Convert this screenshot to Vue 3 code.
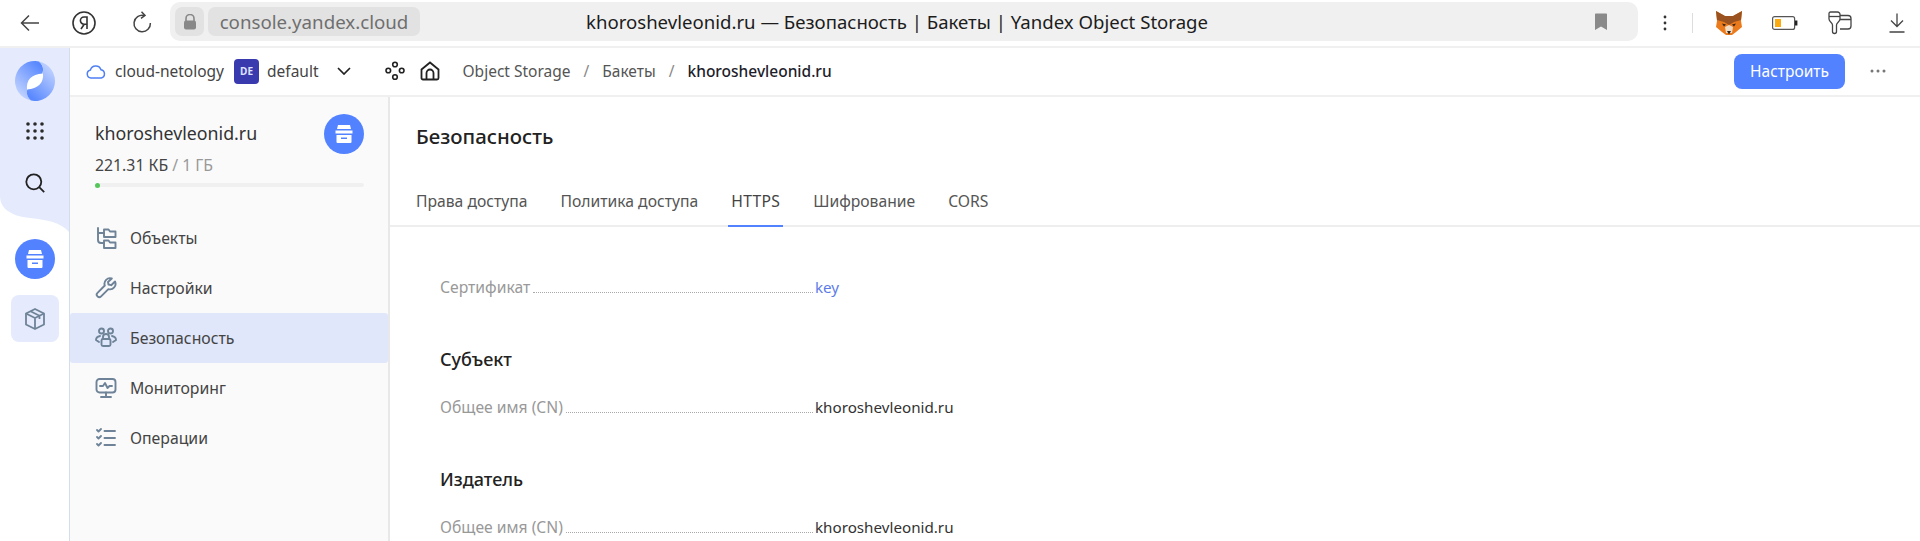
<script setup>
const navItems = [
  { label: "Объекты", icon: "objects" },
  { label: "Настройки", icon: "wrench" },
  { label: "Безопасность", icon: "people", active: true },
  { label: "Мониторинг", icon: "monitor" },
  { label: "Операции", icon: "tasks" },
];

const tabs = ["Права доступа", "Политика доступа", "HTTPS", "Шифрование", "CORS"];
</script>

<template>
  <div class="page">
    <div class="browser">
      <div class="browser-left">
        <svg class="b-back" width="24" height="24" viewBox="0 0 24 24" fill="none" stroke="#444" stroke-width="1.5"><path d="M21 12H4M11 4.5 3.5 12l7.5 7.5" /></svg>
        <svg class="b-ya" width="26" height="26" viewBox="0 0 26 26" fill="none" stroke="#333" stroke-width="1.6">
          <circle cx="13" cy="13" r="11" />
          <path d="M16 19V7h-3a3.5 3.5 0 0 0 0 7.2h3M13.4 14 10 19" />
        </svg>
        <svg class="b-reload" width="24" height="24" viewBox="0 0 24 24" fill="none" stroke="#444" stroke-width="1.5">
          <path d="M14.2 4.5A8.2 8.2 0 1 0 20.4 12" />
          <path d="M11.5 0.8 15 4.4l-4 3" />
        </svg>
      </div>
      <div class="address">
        <div class="lock-chip">
          <svg width="14" height="16" viewBox="0 0 14 16"><path d="M3 7V4.5a4 4 0 0 1 8 0V7" fill="none" stroke="#888" stroke-width="1.6" /><rect x="1" y="6.5" width="12" height="9" rx="2" fill="#888" /></svg>
        </div>
        <div class="host-chip">console.yandex.cloud</div>
        <div class="page-title">khoroshevleonid.ru — Безопасность | Бакеты | Yandex Object Storage</div>
        <svg class="bookmark" width="14" height="18" viewBox="0 0 14 18"><path d="M1 1.5C1 .9 1.4.5 2 .5h10c.6 0 1 .4 1 1V17l-6-3.6L1 17z" fill="#8a8a8a" /></svg>
      </div>
      <div class="browser-right">
        <svg class="b-more" width="4" height="18" viewBox="0 0 4 18" fill="#333"><circle cx="2" cy="3" r="1.4" /><circle cx="2" cy="9" r="1.4" /><circle cx="2" cy="15" r="1.4" /></svg>
        <span class="b-sep"></span>
        <svg class="b-fox" width="26" height="24" viewBox="0 0 26 24">
          <polygon points="0,0 9,5 17,5 26,0 25,10 26,16 20,21 16,24 10,24 6,21 0,16 1,10" fill="#ea7a1c" />
          <polygon points="0,0 9,5 17,5 26,0 25,9 18,11 13,14 8,11 1,9" fill="#9a5220" />
          <polygon points="9,16 13,14 17,16 16,22 10,22" fill="#f0dcc6" />
          <polygon points="11,20 15,20 13,23.5" fill="#33241a" />
          <polygon points="6,12.5 10,13.5 8,15.5" fill="#33241a" />
          <polygon points="20,12.5 16,13.5 18,15.5" fill="#33241a" />
        </svg>
        <svg class="b-battery" width="26" height="14" viewBox="0 0 26 14">
          <rect x=".6" y=".6" width="22" height="12.8" rx="2" fill="#fff" stroke="#555" stroke-width="1.2" />
          <rect x="3" y="3" width="6" height="8" fill="#fbab12" />
          <rect x="23" y="4.5" width="2.4" height="5" fill="#222" />
        </svg>
        <svg class="b-ext" width="24" height="24" viewBox="0 0 24 24" fill="none" stroke="#444" stroke-width="1.3">
          <path d="M12 4.5h8a3 3 0 0 1 3 3V15a3 3 0 0 1-3 3h-8M12 8.5h11" />
          <path d="M2.5 1h7A2.5 2.5 0 0 1 12 3.5V8c0 3-3.5 3.5-3.5 6v6.5a2 2 0 0 1-4 0V14C4.5 11.5 1 11 1 8V2.5A1.5 1.5 0 0 1 2.5 1z" fill="#fff" />
          <path d="M1 5.5h11" />
        </svg>
        <svg class="b-down" width="16" height="20" viewBox="0 0 16 20" fill="none" stroke="#444" stroke-width="1.3"><path d="M8 .5V13M2 7.5 8 13.5l6-6M.5 19h15" /></svg>
      </div>
    </div>

    <div class="app">
      <aside class="rail">
        <svg class="rail-bg" width="69" height="184" viewBox="0 0 69 184"><path d="M0 0H69V184C60 174 48 172 30 170 10 168 0 160 0 148Z" fill="#e5ebfc" /></svg>
        <svg class="rail-logo" width="40" height="40" viewBox="0 0 40 40">
          <defs>
            <linearGradient id="lobe-a" x1=".7" y1="0" x2=".1" y2=".9"><stop offset="0" stop-color="#5a89ff" /><stop offset="1" stop-color="#c6d6ff" /></linearGradient>
            <linearGradient id="lobe-b" x1=".3" y1="1" x2=".9" y2=".1"><stop offset="0" stop-color="#5a89ff" /><stop offset="1" stop-color="#c6d6ff" /></linearGradient>
          </defs>
          <path d="M24 .4C32 8 27 15 20 20S8 32 16 39.6A20 20 0 0 1 24 .4z" fill="url(#lobe-a)" />
          <path d="M16 39.6C8 32 13 25 20 20S32 8 24 .4A20 20 0 0 1 16 39.6z" fill="url(#lobe-b)" />
          <path d="M12 28.5C11 19 16 13.500 28 12.500 29 22 23 27.5 12 28.5z" fill="#fff" />
        </svg>
        <svg class="rail-grid" width="18" height="18" viewBox="0 0 18 18" fill="#2a2a2a">
          <circle cx="2" cy="2" r="1.8" /><circle cx="9" cy="2" r="1.8" /><circle cx="16" cy="2" r="1.8" />
          <circle cx="2" cy="9" r="1.8" /><circle cx="9" cy="9" r="1.8" /><circle cx="16" cy="9" r="1.8" />
          <circle cx="2" cy="16" r="1.8" /><circle cx="9" cy="16" r="1.8" /><circle cx="16" cy="16" r="1.8" />
        </svg>
        <svg class="rail-search" width="20" height="20" viewBox="0 0 20 20" fill="none" stroke="#222" stroke-width="1.8"><circle cx="8.8" cy="8.8" r="7.5" /><path d="m14.2 14.2 5 5" /></svg>
        <div class="rail-bucket">
          <svg width="20" height="20" viewBox="0 0 20 20" fill="#fff"><path d="M4 1h12l1 4H3z" /><path d="M1.5 6.5h17v3h-17z" /><path fill-rule="evenodd" d="M2.5 11h15v7a1 1 0 0 1-1 1h-13a1 1 0 0 1-1-1zM7 13.5V15h6v-1.5z" /></svg>
        </div>
        <div class="rail-tile">
          <svg width="20" height="22" viewBox="0 0 20 22" fill="none" stroke="#6e8398" stroke-width="1.8" stroke-linejoin="round"><path d="M10 1 1 5.5v11L10 21l9-4.5v-11z" /><path d="m1 5.5 9 4.5 9-4.5M10 10v11M5.5 3.2l9 4.6V11" /></svg>
        </div>
      </aside>

      <div class="workspace">
        <header class="topbar">
          <svg class="cloud" width="20" height="16" viewBox="0 0 20 16" fill="none" stroke="#4f7ff5" stroke-width="1.5"><path d="M5 15a4 4 0 0 1-.6-7.900A5.500 5.500 0 0 1 15 6.800 4.200 4.200 0 0 1 15.300 15z" /></svg>
          <span class="cloud-name">cloud-netology</span>
          <span class="folder-chip">DE</span>
          <span class="folder-name">default</span>
          <svg class="chevron" width="14" height="8" viewBox="0 0 14 8" fill="none" stroke="#222" stroke-width="1.7"><path d="m1 1 6 6 6-6" /></svg>
          <svg class="services" width="20" height="20" viewBox="0 0 20 20" fill="none" stroke="#222" stroke-width="1.6"><circle cx="10" cy="3.5" r="2.3" /><circle cx="3.3" cy="9.5" r="2.3" /><circle cx="16.7" cy="9.5" r="2.3" /><circle cx="10" cy="16" r="2.3" /></svg>
          <svg class="home" width="20" height="20" viewBox="0 0 20 20" fill="none" stroke="#222" stroke-width="1.8"><path d="M1.5 17V8.500L10 1.500l8.500 7V17a1.500 1.500 0 0 1-1.500 1.500H3A1.500 1.500 0 0 1 1.500 17z" /><path d="M6.500 18.500V12a3.500 3.500 0 0 1 7 0v6.500" /></svg>
          <nav class="crumbs">
            <span>Object Storage</span>
            <i>/</i>
            <span>Бакеты</span>
            <i>/</i>
            <b>khoroshevleonid.ru</b>
          </nav>
          <button class="configure">Настроить</button>
          <svg class="more" width="16" height="4" viewBox="0 0 16 4" fill="#777"><circle cx="2" cy="2" r="1.5" /><circle cx="8" cy="2" r="1.5" /><circle cx="14" cy="2" r="1.5" /></svg>
        </header>

        <div class="body">
          <aside class="side">
            <div class="bucket-head">
              <div class="bucket-info">
                <div class="bucket-name">khoroshevleonid.ru</div>
                <div class="bucket-size">221.31 КБ <span>/ 1 ГБ</span></div>
              </div>
              <div class="bucket-circle">
                <svg width="20" height="20" viewBox="0 0 20 20" fill="#fff"><path d="M4 1h12l1 4H3z" /><path d="M1.5 6.5h17v3h-17z" /><path fill-rule="evenodd" d="M2.5 11h15v7a1 1 0 0 1-1 1h-13a1 1 0 0 1-1-1zM7 13.5V15h6v-1.5z" /></svg>
              </div>
            </div>
            <div class="bucket-bar"><span></span></div>
            <div class="nav">
              <div v-for="item in navItems" :key="item.label" class="nav-item" :class="{ active: item.active }">
                <svg class="nav-icon" width="22" height="22" viewBox="0 0 22 22" fill="none" stroke="#6e8398" stroke-width="1.9" stroke-linejoin="round" stroke-linecap="round">
                  <template v-if="item.icon === 'objects'">
                    <path d="M3 1v12a3 3 0 0 0 3 3h3M3 6h6" />
                    <path d="M9 10V2.5h4.5l1.5 2h5.5V10zM9 21v-7.500h4.500l1.500 2h5.500V21z" />
                  </template>
                  <template v-else-if="item.icon === 'wrench'">
                    <path d="M20 4.500 16.200 8.200 13.500 7.500 13 5l3.800-3.500A5.500 5.500 0 0 0 9.800 8.500L2.500 15.800a2.500 2.500 0 0 0 3.600 3.600l7.300-7.300A5.500 5.500 0 0 0 20 4.500z" />
                  </template>
                  <template v-else-if="item.icon === 'people'">
                    <circle cx="6.5" cy="4" r="2.5" />
                    <circle cx="15.5" cy="4" r="2.5" />
                    <path d="M5 9C2.500 9.500 1 11 1 13l3 2M17 9c2.500.5 4 2 4 4l-3 2" />
                    <path d="M8 11.500V10a3 3 0 0 1 6 0v1.500" />
                    <rect x="6.5" y="12" width="9" height="7" rx="1.5" />
                  </template>
                  <template v-else-if="item.icon === 'monitor'">
                    <rect x="1.5" y="2" width="19" height="13.5" rx="3" />
                    <path d="M5 9h3l2-3 2.500 5 2-2H17M6 20h10M11 15.500V20" />
                  </template>
                  <template v-else>
                    <path d="m2 3 1.500 1.500L6 2M2 10l1.500 1.500L6 9M2 17l1.500 1.500L6 16M9.500 4h10.500M9.500 11h10.500M9.500 18h10.500" />
                  </template>
                </svg>
                <span>{{ item.label }}</span>
              </div>
            </div>
          </aside>

          <main class="content">
            <h1 class="title">Безопасность</h1>
            <div class="tabs">
              <span v-for="tab in tabs" :key="tab" class="tab" :class="{ current: tab === 'HTTPS' }">{{ tab }}</span>
            </div>
            <div class="details">
              <div class="row">
                <span class="key">Сертификат</span><span class="dots"></span><a class="val link">key</a>
              </div>
              <h2 class="sub">Субъект</h2>
              <div class="row">
                <span class="key">Общее имя (CN)</span><span class="dots"></span><span class="val">khoroshevleonid.ru</span>
              </div>
              <h2 class="sub">Издатель</h2>
              <div class="row">
                <span class="key">Общее имя (CN)</span><span class="dots"></span><span class="val">khoroshevleonid.ru</span>
              </div>
            </div>
          </main>
        </div>
      </div>
    </div>
  </div>
</template>

<style>
html,
body {
  margin: 0;
  height: 100%;
  overflow: hidden;
  background: #fff;
}
</style>

<style scoped>
.page {
  width: 1920px;
  height: 541px;
  overflow: hidden;
  display: flex;
  flex-direction: column;
  font-family: "Noto Sans", sans-serif;
  color: #2b2b2b;
}

.browser {
  height: 46px;
  flex: none;
  display: flex;
  align-items: flex-start;
  border-bottom: 2px solid #f0f0f0;
  background: #fff;
}
.browser-left {
  width: 170px;
  height: 46px;
  flex: none;
  display: flex;
  align-items: center;
}
.b-back {
  margin-left: 18px;
}
.b-ya {
  margin-left: 29px;
}
.b-reload {
  margin-left: 33px;
}
.address {
  width: 1468px;
  height: 39px;
  margin-top: 2px;
  flex: none;
  display: flex;
  align-items: center;
  background: #f0f0f0;
  border-radius: 10px;
}
.lock-chip {
  width: 29px;
  height: 29px;
  margin-left: 5px;
  display: flex;
  align-items: center;
  justify-content: center;
  background: #e2e2e2;
  border-radius: 7px;
}
.host-chip {
  height: 29px;
  width: 212px;
  margin-left: 4px;
  display: flex;
  align-items: center;
  justify-content: center;
  background: #e2e2e2;
  border-radius: 7px;
  font-size: 18.7px;
  color: #6f6f6f;
}
.page-title {
  margin-left: 166px;
  font-size: 18.6px;
  color: #1c1c1c;
  white-space: nowrap;
}
.bookmark {
  margin-left: auto;
  margin-right: 30px;
}
.browser-right {
  flex: 1;
  height: 46px;
  display: flex;
  align-items: center;
}
.b-more {
  margin-left: 25px;
}
.b-sep {
  width: 1px;
  height: 20px;
  margin-left: 25px;
  background: #ddd;
}
.b-fox {
  margin-left: 23px;
}
.b-battery {
  margin-left: 30px;
}
.b-ext {
  margin-left: 30px;
}
.b-down {
  margin-left: 37px;
}

.app {
  flex: 1;
  min-height: 0;
  display: flex;
}

.rail {
  width: 69px;
  flex: none;
  position: relative;
  display: flex;
  flex-direction: column;
  align-items: center;
  border-right: 1px solid #d5dcea;
}
.rail-bg {
  position: absolute;
  left: 0;
  top: 0;
}
.rail-logo,
.rail-grid,
.rail-search,
.rail-bucket,
.rail-tile {
  position: relative;
  flex: none;
}
.rail-logo {
  margin-top: 13px;
}
.rail-grid {
  margin-top: 21px;
}
.rail-search {
  margin-top: 33px;
}
.rail-bucket {
  width: 40px;
  height: 40px;
  margin-top: 46px;
  display: flex;
  align-items: center;
  justify-content: center;
  border-radius: 50%;
  background: #5282ff;
}
.rail-tile {
  width: 48px;
  height: 47px;
  margin-top: 16px;
  display: flex;
  align-items: center;
  justify-content: center;
  border-radius: 8px;
  background: #e5ebfc;
}

.workspace {
  flex: 1;
  min-width: 0;
  display: flex;
  flex-direction: column;
}

.topbar {
  height: 46px;
  padding-bottom: 1px;
  flex: none;
  display: flex;
  align-items: center;
  border-bottom: 2px solid #f0f0f0;
  font-size: 15.5px;
}
.cloud {
  margin-left: 16px;
}
.cloud-name {
  margin-left: 9px;
  color: #444;
}
.folder-chip {
  width: 25px;
  height: 25px;
  margin-left: 10px;
  display: flex;
  align-items: center;
  justify-content: center;
  background: #3a3aaf;
  border-radius: 4px;
  color: #dfe3ff;
  font-size: 10px;
  font-weight: 700;
}
.folder-name {
  margin-left: 8px;
  color: #444;
}
.chevron {
  margin-left: 18px;
}
.services {
  margin-left: 34px;
}
.home {
  margin-left: 15px;
}
.crumbs {
  margin-left: 23px;
  display: flex;
  align-items: center;
  color: #555;
}
.crumbs i {
  font-style: normal;
  margin: 0 13px;
  color: #888;
}
.crumbs b {
  font-weight: 500;
  color: #1d1d2b;
}
.configure {
  margin-left: auto;
  width: 111px;
  height: 35px;
  padding: 0;
  border: 0;
  border-radius: 8px;
  background: #5282ff;
  color: #fff;
  font: 15.5px "Noto Sans", sans-serif;
}
.more {
  margin-left: 25px;
  margin-right: 34px;
}

.body {
  flex: 1;
  min-height: 0;
  display: flex;
}

.side {
  width: 318px;
  flex: none;
  background: #fafafa;
  border-right: 2px solid #e8e8e8;
}
.bucket-head {
  display: flex;
  justify-content: space-between;
  align-items: flex-start;
  padding: 17px 24px 0 25px;
}
.bucket-name {
  font-size: 17.8px;
  line-height: 22px;
  margin-top: 8px;
  color: #333;
}
.bucket-size {
  margin-top: 11px;
  font-size: 15.8px;
  line-height: 20px;
  color: #444;
}
.bucket-size span {
  color: #999;
}
.bucket-circle {
  width: 40px;
  height: 40px;
  display: flex;
  align-items: center;
  justify-content: center;
  border-radius: 50%;
  background: #5282ff;
}
.bucket-bar {
  height: 4px;
  margin: 8px 24px 0 25px;
  border-radius: 2px;
  background: #f0f0f0;
}
.bucket-bar span {
  display: block;
  width: 5px;
  height: 5px;
  border-radius: 50%;
  background: #55c75a;
}
.nav {
  margin-top: 26px;
}
.nav-item {
  height: 50px;
  display: flex;
  align-items: center;
  gap: 13px;
  padding-left: 25px;
  font-size: 15.8px;
  color: #444;
}
.nav-item.active {
  background: #e0e7fa;
  border-radius: 3px;
}
.nav-icon {
  width: 22px;
  height: 22px;
  flex: none;
}

.content {
  flex: 1;
  min-width: 0;
}
.title {
  margin: 26px 0 0 26px;
  font-size: 20.4px;
  line-height: 26px;
  font-weight: 500;
  color: #222;
}
.tabs {
  height: 76px;
  display: flex;
  gap: 33px;
  padding: 0 0 0 26px;
  border-bottom: 2px solid #eee;
}
.tab {
  height: 78px;
  box-sizing: border-box;
  display: flex;
  align-items: flex-end;
  padding: 0 2px 13px;
  margin: 0 -2px;
  font-size: 15.7px;
  color: #555;
  border-bottom: 2px solid transparent;
}
.tab.current {
  border-color: #5282ff;
  color: #444;
  letter-spacing: 0.3px;
  padding: 0 3px 13px;
  margin: 0 -3px;
}
.details {
  padding: 48px 0 0 50px;
}
.row {
  width: 520px;
  height: 24px;
  display: flex;
  align-items: baseline;
  font-size: 15.7px;
  line-height: 24px;
}
.key {
  color: #999;
}
.dots {
  flex: 1;
  margin: 0 2px 0 3px;
  border-bottom: 1px dotted #aaa;
}
.val {
  width: 145px;
  color: #333;
  flex: none;
  white-space: nowrap;
  font-size: 15.2px;
}
.val.link {
  color: #5d7be8;
}
.sub {
  margin: 48px 0 24px;
  font-size: 18px;
  line-height: 24px;
  font-weight: 500;
  color: #222;
}
</style>
